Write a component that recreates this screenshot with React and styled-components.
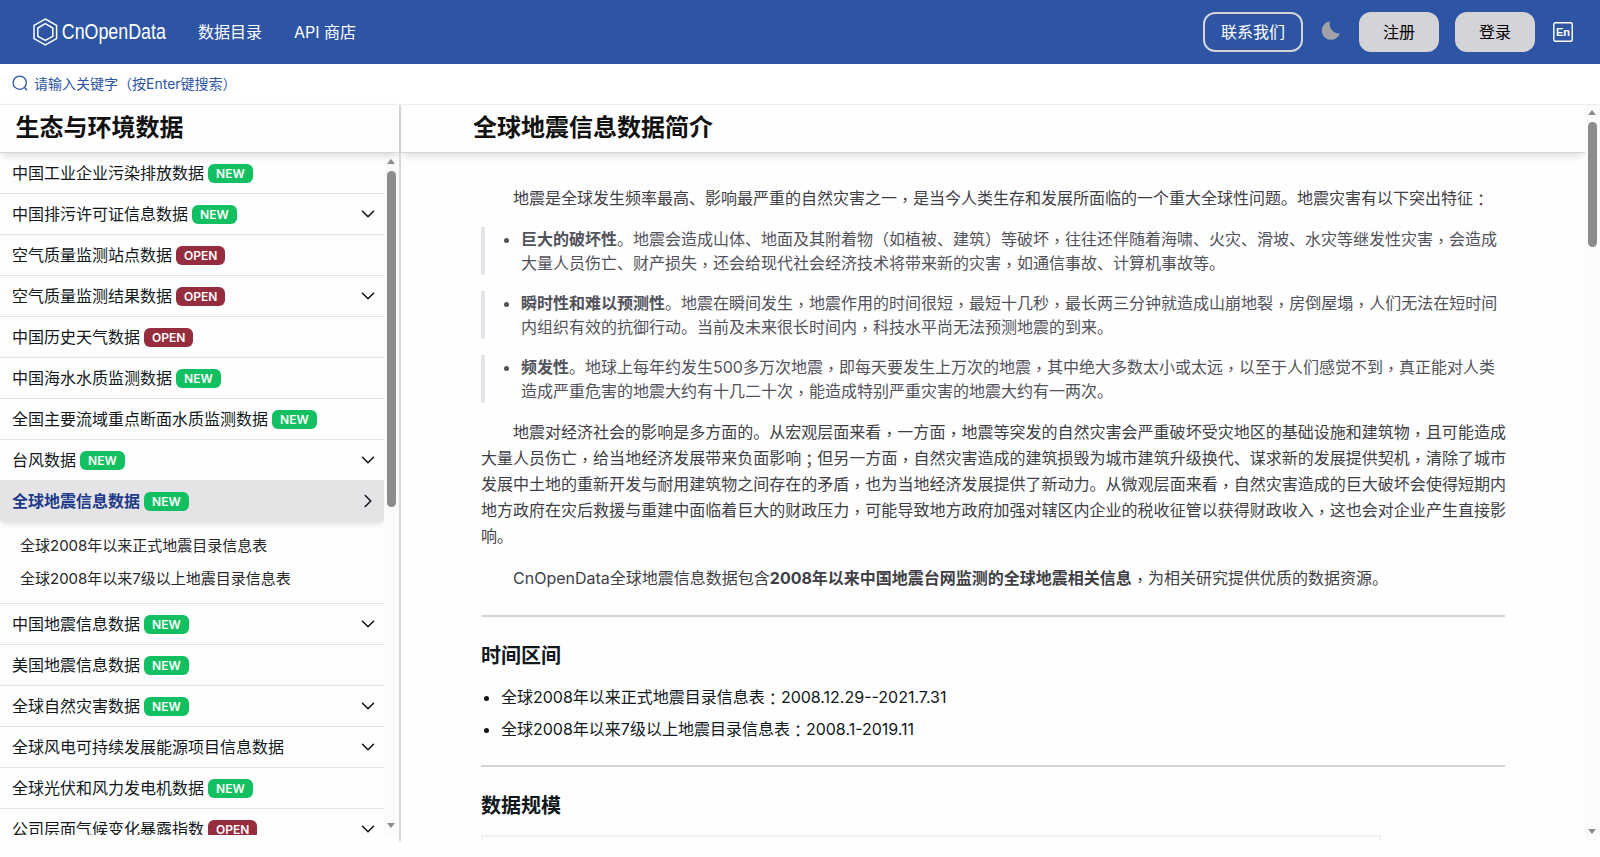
import React from "react";
import styled, { createGlobalStyle } from "styled-components";
import { FiChevronDown, FiChevronRight } from "react-icons/fi";

const GlobalStyle = createGlobalStyle`
  * {
    box-sizing: border-box;
  }
  body {
    margin: 0;
    background: #fefefe;
    color: #18181b;
    font-family: Inter, "Noto Sans CJK SC", sans-serif;
    font-size: 16px;
    line-height: 24px;
    overflow: hidden;
  }
`
const Page = styled.div`
  height: 857px;
  padding-bottom: 16px;
  display: flex;
  flex-direction: column;
`
const Header = styled.header`
  flex: none;
  height: 64px;
  padding: 0 27px 0 32px;
  display: flex;
  align-items: center;
  background: #2d55a4;
  color: #fff;
`
const Logo = styled.svg`
  width: 134px;
  height: 32px;
  margin-right: 32px;
  overflow: visible;
`
const NavLink = styled.a`
  margin-right: 32px;
  color: #fff;
`
const Actions = styled.div`
  margin-left: auto;
  display: flex;
  align-items: center;
`
const Button = styled.button`
  width: ${props => props.$outline ? "100px" : "80px"};
  height: 40px;
  padding: 0;
  margin-right: ${props => props.$gap}px;
  border: 2px solid #d4d4d8;
  border-radius: 12px;
  background: ${props => props.$outline ? "transparent" : "#d4d4d8"};
  color: ${props => props.$outline ? "#fff" : "#000"};
  font: inherit;
`
const Moon = styled.svg`
  width: 20px;
  height: 20px;
  margin: -5px 18px 0 0;
`
const Search = styled.div`
  flex: none;
  height: 41px;
  padding: 0 12px;
  display: flex;
  align-items: center;
  gap: 6px;
  border-bottom: 1px solid #ececee;
  background: #fff;
  color: #2d55a4;
  font-size: 14px;

  svg {
    width: 16px;
    height: 16px;
    margin-top: -2px;
  }
`
const Body = styled.div`
  flex: 1;
  min-height: 0;
  display: flex;
`
const Sidebar = styled.aside`
  width: 401px;
  border-right: 2px solid #d8d8db;
  display: flex;
  flex-direction: column;
  padding-bottom: 6px;
`
const TitleBar = styled.h1`
  flex: none;
  position: relative;
  height: 48px;
  margin: 0;
  padding-left: ${props => props.$indent}px;
  border-bottom: 1px solid #d8d8db;
  box-shadow: 0 4px 8px -2px rgba(0, 0, 0, 0.16);
  color: #111;
  font-size: 24px;
  font-weight: 600;
  line-height: 46px;
`
const Scroller = styled.div`
  flex: 1;
  min-height: 0;
  display: flex;
`
const Menu = styled.div`
  flex: 1;
  overflow: hidden;
`
const MenuItem = styled.div`
  position: relative;
  height: 41px;
  padding: 0 5px 0 12px;
  display: flex;
  align-items: center;
  border-bottom: 1px solid #e4e4e7;
  background: ${props => props.$active ? "#e4e4e6" : "transparent"};
  box-shadow: ${props => props.$active ? "0 4px 6px -2px rgba(0, 0, 0, 0.14)" : "none"};
  border-radius: ${props => props.$active ? "0 0 4px 4px" : "0"};
  color: ${props => props.$active ? "#1e3a8a" : "#11181c"};
  font-weight: ${props => props.$active ? 600 : 400};

  svg {
    margin-left: auto;
    color: #11181c;
    stroke-width: 1.75;
  }
`
const Badge = styled.span`
  height: 19px;
  margin-left: 4px;
  padding: 0 8px;
  border-radius: 6px;
  background: ${props => props.$type === "NEW" ? "#12c062" : "#962d3e"};
  color: #fff;
  font-size: 12px;
  font-weight: 600;
  line-height: 19px;
`
const SubMenu = styled.div`
  height: 82px;
  padding: 7px 0 0 20px;
  border-bottom: 1px solid #e4e4e7;
  color: #27272a;
  font-size: 15px;
  line-height: 33px;
`
const Track = styled.div`
  flex: none;
  width: 15px;
  padding: ${props => props.$top}px 3px 7px;
  display: flex;
  flex-direction: column;
  background: #fbfbfb;
`
const Arrow = styled.i`
  width: 0;
  height: 0;
  border: solid transparent;
  border-width: 0 4.5px;
  ${props => props.$down ? "border-top: 5px solid #8b8b8b; margin-top: auto;" : "border-bottom: 5px solid #8b8b8b;"}
`
const Thumb = styled.div`
  width: 9px;
  height: ${props => props.$size}px;
  margin-top: 7px;
  border-radius: 5px;
  background: #8b8b8b;
`
const Main = styled.main`
  flex: 1;
  min-width: 0;
  display: flex;
`
const Content = styled.div`
  flex: 1;
  overflow: hidden;
`
const Article = styled.article`
  width: 1024px;
  margin: 32px 0 0 80px;
`
const Text = styled.p`
  margin: 0 -1px 16px 0;
  color: #3f3f46;
  line-height: 26px;
  text-align: justify;
  text-indent: 2em;
`
const Feature = styled.ul`
  margin: 0 0 16px;
  padding: 0 0 0 36px;
  border-left: 4px solid #e4e4eb;
  color: #52525b;
`
const Rule = styled.hr`
  height: 2px;
  margin: ${props => props.$top || 24}px 0 24px;
  border: 0;
  background: #d4d4d8;
`
const Heading = styled.h2`
  height: 28px;
  margin: 0 0 12px;
  color: #11181c;
  font-size: 20px;
  font-weight: 600;
  line-height: 30px;
`
const Ranges = styled.ul`
  margin: 0;
  padding-left: 20px;
  color: #11181c;
  line-height: 32px;
`
const Table = styled.div`
  width: 900px;
  height: 60px;
  margin-top: 16px;
  border: 2px solid #f1f1f2;
`
// commas and colons sit in the middle of their cell
const Mark = styled.span`
  font-family: "Noto Sans CJK TC", sans-serif;
  line-height: 1;
  vertical-align: -2px;
`

const items = [
  { name: "中国工业企业污染排放数据", tag: "NEW" },
  { name: "中国排污许可证信息数据", tag: "NEW", more: true },
  { name: "空气质量监测站点数据", tag: "OPEN" },
  { name: "空气质量监测结果数据", tag: "OPEN", more: true },
  { name: "中国历史天气数据", tag: "OPEN" },
  { name: "中国海水水质监测数据", tag: "NEW" },
  { name: "全国主要流域重点断面水质监测数据", tag: "NEW" },
  { name: "台风数据", tag: "NEW", more: true },
  {
    name: "全球地震信息数据",
    tag: "NEW",
    children: ["全球2008年以来正式地震目录信息表", "全球2008年以来7级以上地震目录信息表"]
  },
  { name: "中国地震信息数据", tag: "NEW", more: true },
  { name: "美国地震信息数据", tag: "NEW" },
  { name: "全球自然灾害数据", tag: "NEW", more: true },
  { name: "全球风电可持续发展能源项目信息数据", more: true },
  { name: "全球光伏和风力发电机数据", tag: "NEW" },
  { name: "公司层面气候变化暴露指数", tag: "OPEN", more: true }
];

const intro = "地震是全球发生频率最高、影响最严重的自然灾害之一，是当今人类生存和发展所面临的一个重大全球性问题。地震灾害有以下突出特征：";

const features = [
  {
    title: "巨大的破坏性",
    text: "。地震会造成山体、地面及其附着物（如植被、建筑）等破坏，往往还伴随着海啸、火灾、滑坡、水灾等继发性灾害，会造成大量人员伤亡、财产损失，还会给现代社会经济技术将带来新的灾害，如通信事故、计算机事故等。"
  },
  {
    title: "瞬时性和难以预测性",
    text: "。地震在瞬间发生，地震作用的时间很短，最短十几秒，最长两三分钟就造成山崩地裂，房倒屋塌，人们无法在短时间内组织有效的抗御行动。当前及未来很长时间内，科技水平尚无法预测地震的到来。"
  },
  {
    title: "频发性",
    text: "。地球上每年约发生500多万次地震，即每天要发生上万次的地震，其中绝大多数太小或太远，以至于人们感觉不到，真正能对人类造成严重危害的地震大约有十几二十次，能造成特别严重灾害的地震大约有一两次。"
  }
];

const impact = "地震对经济社会的影响是多方面的。从宏观层面来看，一方面，地震等突发的自然灾害会严重破坏受灾地区的基础设施和建筑物，且可能造成大量人员伤亡，给当地经济发展带来负面影响；但另一方面，自然灾害造成的建筑损毁为城市建筑升级换代、谋求新的发展提供契机，清除了城市发展中土地的重新开发与耐用建筑物之间存在的矛盾，也为当地经济发展提供了新动力。从微观层面来看，自然灾害造成的巨大破坏会使得短期内地方政府在灾后救援与重建中面临着巨大的财政压力，可能导致地方政府加强对辖区内企业的税收征管以获得财政收入，这也会对企业产生直接影响。";

const ranges = [
  "全球2008年以来正式地震目录信息表：2008.12.29--2021.7.31",
  "全球2008年以来7级以上地震目录信息表：2008.1-2019.11"
];

function marked(text) {
  return text.split(/([，：；])/).map((part, i) => (
    i % 2 ? <Mark key={i}>{part}</Mark> : part
  ));
}

function Scrollbar({ size, top }) {
  return (
    <Track $top={top}>
      <Arrow />
      <Thumb $size={size} />
      <Arrow $down />
    </Track>
  )
}

function TopBar() {
  return (
    <Header>
      <Logo viewBox="0 0 134 32" fill="none" stroke="#fff">
        <path d="M13.3 3 24.6 9.4v13.2L13.3 29 2 22.6V9.4z" strokeWidth="1.5" />
        <path d="M13.3 7.7 20.8 12v8.3l-7.5 4.2-7.5-4.2V12z" strokeWidth="1.5" />
        <text x="29.8" y="23.2" fill="#fff" stroke="none" fontFamily="Liberation Sans" fontSize="22" textLength="104" lengthAdjust="spacingAndGlyphs">CnOpenData</text>
      </Logo>
      <NavLink>数据目录</NavLink>
      <NavLink>API 商店</NavLink>
      <Actions>
        <Button $outline $gap={18}>联系我们</Button>
        <Moon viewBox="0 0 20 20">
          <path d="M8.9 1.3A9.3 9.3 0 1 0 18.9 13.4 9.6 9.6 0 0 1 8.9 1.3z" fill="#a1a1aa" />
        </Moon>
        <Button $gap={16}>注册</Button>
        <Button $gap={18}>登录</Button>
        <svg width="20" height="20" viewBox="0 0 20 20">
          <rect x="0.8" y="0.8" width="18.4" height="18.4" rx="1.5" fill="none" stroke="#fff" strokeWidth="1.4" />
          <text x="2.9" y="14.2" fill="#fff" fontFamily="Liberation Sans" fontWeight="700" fontSize="11.5" textLength="14" lengthAdjust="spacingAndGlyphs">En</text>
        </svg>
      </Actions>
    </Header>
  )
}

function Catalog() {
  return (
    <Menu>
      { items.map(item => (
        <React.Fragment key={item.name}>
          <MenuItem $active={!!item.children}>
            {item.name}
            {item.tag && <Badge $type={item.tag}>{item.tag}</Badge>}
            {item.more && <FiChevronDown size={22} />}
            {item.children && <FiChevronRight size={22} />}
          </MenuItem>
          {item.children && (
            <SubMenu>
              { item.children.map(child => <div key={child}>{child}</div>) }
            </SubMenu>
          )}
        </React.Fragment>
      ))}
    </Menu>
  )
}

function App() {
  return (
    <Page>
      <GlobalStyle />
      <TopBar />
      <Search>
        <svg viewBox="0 0 16 16" fill="none" stroke="currentColor" strokeWidth="1.3" strokeLinecap="round">
          <circle cx="7.7" cy="7.7" r="6.6" />
          <path d="m13 13 1.7 1.7" />
        </svg>
        请输入关键字（按Enter键搜索）
      </Search>
      <Body>
        <Sidebar>
          <TitleBar $indent={15.5}>生态与环境数据</TitleBar>
          <Scroller>
            <Catalog />
            <Scrollbar size={336} top={6} />
          </Scroller>
        </Sidebar>
        <Main>
          <Content>
            <TitleBar $indent={72}>全球地震信息数据简介</TitleBar>
            <Article>
              <Text>{marked(intro)}</Text>
              { features.map(feature => (
                <Feature key={feature.title}>
                  <li><b>{feature.title}</b>{marked(feature.text)}</li>
                </Feature>
              ))}
              <Text>{marked(impact)}</Text>
              <Text>
                CnOpenData全球地震信息数据包含<b>2008年以来中国地震台网监测的全球地震相关信息</b>{marked("，为相关研究提供优质的数据资源。")}
              </Text>
              <Rule />
              <Heading>时间区间</Heading>
              <Ranges>
                { ranges.map(range => <li key={range}>{marked(range)}</li>) }
              </Ranges>
              <Rule $top={20} />
              <Heading>数据规模</Heading>
              <Table />
            </Article>
          </Content>
          <Scrollbar size={125} top={5} />
        </Main>
      </Body>
    </Page>
  )
}

export default App;
